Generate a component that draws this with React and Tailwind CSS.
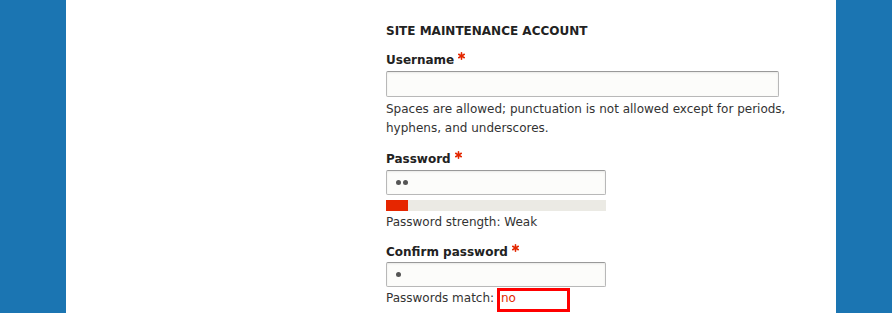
import React from "react";

const Required = () => (
  <svg className="ml-[4px] mt-[1px] self-start" width="7" height="8" viewBox="0 0 7 8">
    <g stroke="#e32700" strokeWidth="1.6" strokeLinecap="round">
      <line x1="3.5" y1="0.8" x2="3.5" y2="7.2" />
      <line x1="0.7" y1="2.3" x2="6.3" y2="5.7" />
      <line x1="0.7" y1="5.7" x2="6.3" y2="2.3" />
    </g>
  </svg>
);

const Label = ({ children, className = "" }) => (
  <div className={"flex items-start text-[12px] leading-[18px] font-bold text-[#222] " + className}>
    <span>{children}</span>
    <Required />
  </div>
);

const Field = ({ wide, dots = 0, className = "" }) => (
  <div
    className={
      "flex items-center gap-[2px] pl-[9px] rounded-[2px] border border-[#b8b8b8] border-t-[#999] bg-[#fcfcfa] shadow-[inset_0_1px_2px_rgba(0,0,0,0.08)] " +
      (wide ? "w-[393px] h-[26px] " : "w-[220px] h-[25px] ") +
      className
    }
  >
    {Array.from({ length: dots }).map((_, i) => (
      <span key={i} className="block w-[5px] h-[5px] rounded-full bg-[#555]" />
    ))}
  </div>
);

export default function App() {
  return (
    <div className="h-[313px] overflow-hidden bg-[#1b75b2] font-['DejaVu_Sans',sans-serif]">
      <div className="ml-[66px] w-[770px] h-full bg-white pl-[320px]">
        <h2 className="pt-[22px] text-[12px] leading-[18px] font-bold uppercase text-[#222]">
          Site maintenance account
        </h2>

        <Label className="mt-[11px]">Username</Label>
        <Field wide className="mt-[2px]" />
        <p className="mt-[3px] w-[410px] text-[12px] leading-[19px] text-[#333]">
          Spaces are allowed; punctuation is not allowed except for periods, hyphens, and underscores.
        </p>

        <Label className="mt-[12px]">Password</Label>
        <Field dots={2} className="mt-[2px]" />
        <div className="mt-[5px] w-[220px] h-[11px] bg-[#ebeae4]">
          <div className="w-[22px] h-full bg-[#e62600]" />
        </div>
        <p className="mt-[2px] text-[12px] leading-[19px] text-[#333]">Password strength: Weak</p>

        <Label className="mt-[11px]">Confirm password</Label>
        <Field dots={1} className="mt-[1px]" />
        <div className="relative mt-[2px] text-[12px] leading-[19px] text-[#333]">
          Passwords match: <span className="ml-[3px] text-[#e32700]">no</span>
          <div className="absolute left-[111px] top-[-1px] w-[73px] h-[24px] border-[3px] border-[#ff0000]" />
        </div>
      </div>
    </div>
  );
}
